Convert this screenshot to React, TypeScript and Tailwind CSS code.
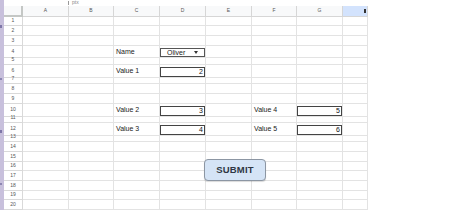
type Cell = { label?: string; value?: string; dropdown?: string };

const COLS = ['A', 'B', 'C', 'D', 'E', 'F', 'G', 'H'];
const GRID = 'grid grid-cols-[19px_46px_45px_46px_46px_46px_45px_46px_25px]';

const sheet: Record<number, Record<string, Cell>> = {
  4: { C: { label: 'Name' }, D: { dropdown: 'Oliver' } },
  6: { C: { label: 'Value 1' }, D: { value: '2' } },
  10: { C: { label: 'Value 2' }, D: { value: '3' }, F: { label: 'Value 4' }, G: { value: '5' } },
  12: { C: { label: 'Value 3' }, D: { value: '4' }, F: { label: 'Value 5' }, G: { value: '6' } },
};

function CellBody({ cell }: { cell?: Cell }) {
  if (!cell) return null;
  if (cell.label) {
    return <span className="pl-[2px] text-[7px] leading-none text-[#222]">{cell.label}</span>;
  }
  if (cell.dropdown) {
    return (
      <div className="mt-[2px] flex h-[9px] w-full items-center justify-between border border-[#555] bg-white pl-[6px] pr-[6px]">
        <span className="text-[7px] leading-none text-[#222]">{cell.dropdown}</span>
        <span className="h-0 w-0 border-x-[2.5px] border-t-[3px] border-x-transparent border-t-[#333]" />
      </div>
    );
  }
  return (
    <div className="mt-[2px] flex h-[10px] w-full items-center justify-end border border-[#444] bg-white pr-[1px]">
      <span className="text-[7px] leading-none text-[#111]">{cell.value}</span>
    </div>
  );
}

export default function App() {
  const rows = Array.from({ length: 20 }, (_, i) => i + 1);

  return (
    <div className="relative flex h-[210px] w-[474px] overflow-hidden bg-white font-['Liberation_Sans',Arial,sans-serif]">
      <div className="flex h-full w-[4px] flex-col justify-around bg-[#c8c0dc]">
        <span className="h-[3px] w-[2px] bg-[#7f77a8]" />
        <span className="h-[2px] w-[2px] bg-[#8d86b2]" />
        <span className="h-[3px] w-[2px] bg-[#7f77a8]" />
        <span className="h-[2px] w-[2px] bg-[#8d86b2]" />
      </div>

      <div className="flex w-[364px] flex-col">
        <div className="flex h-[6px] items-center gap-[3px] pl-[64px]">
          <span className="h-[4px] w-px bg-[#999]" />
          <span className="text-[5px] leading-[5px] text-[#888]">ptx</span>
        </div>

        <div className={`${GRID} h-[11px] bg-[#f8f9fa]`}>
          <div className="border-b-2 border-r-2 border-[#c4c7c5]" />
          {COLS.map((c) => (
            <div
              key={c}
              className={`flex items-center border-b border-r border-[#d6d6d6] text-[5px] leading-none text-[#555] ${
                c === 'H' ? 'justify-end bg-[#d3e3fd] pr-[1px]' : 'justify-center'
              }`}
            >
              {c === 'H' ? <span className="h-[4px] w-[2px] bg-[#333]" /> : c}
            </div>
          ))}
        </div>

        {rows.map((r) => (
          <div key={r} className={`${GRID} h-[9.68px] shrink-0`}>
            <div className="flex items-center justify-center border-b border-r border-[#d9d9d9] text-[5px] leading-none text-[#555]">
              {r}
            </div>
            {COLS.map((c) => {
              const cell = sheet[r]?.[c];
              return (
                <div
                  key={c}
                  className={`flex border-b border-r border-[#e3e3e3] ${cell?.label ? 'items-center' : 'items-start'}`}
                >
                  <CellBody cell={cell} />
                </div>
              );
            })}
          </div>
        ))}
      </div>

      <button className="absolute left-[204px] top-[159px] flex h-[22px] w-[62px] items-center justify-center rounded-[4px] border border-[#8c96a3] bg-[#d5e4f6] text-[9.5px] font-bold tracking-[0.2px] text-[#2f3744] shadow-[0_1px_1px_rgba(0,0,0,0.15)]">
        SUBMIT
      </button>
    </div>
  );
}
